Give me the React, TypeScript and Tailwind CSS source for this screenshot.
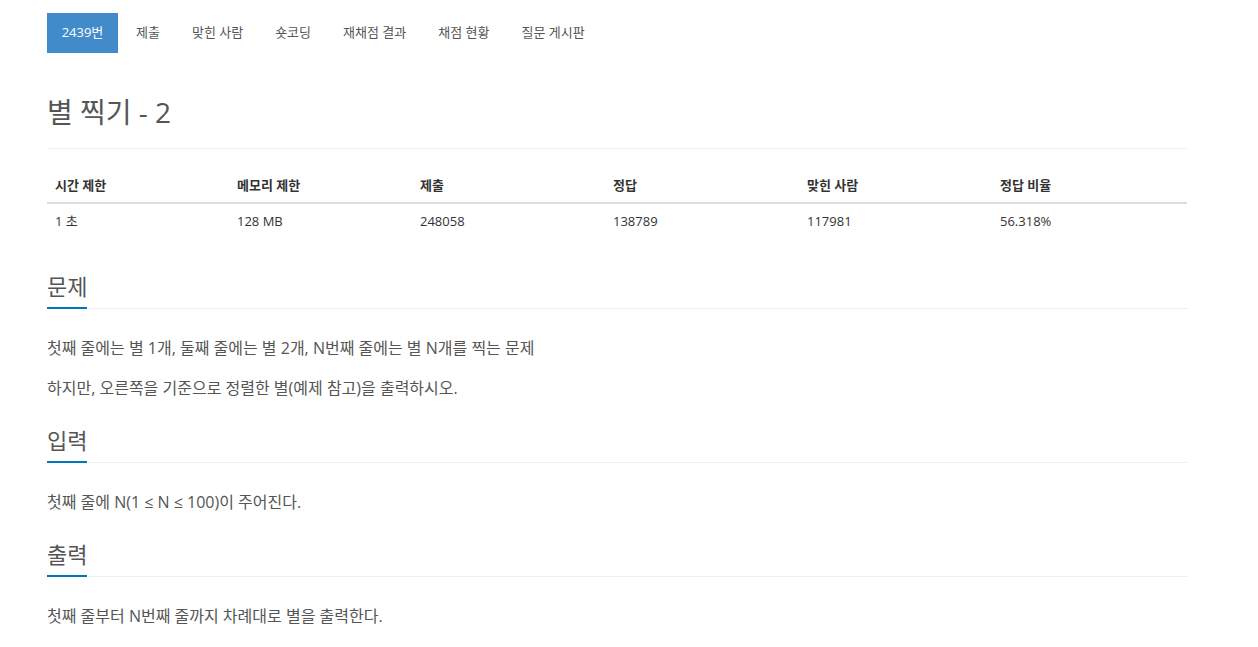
import React from "react";

const font = { fontFamily: '"Open Sans", "Noto Sans CJK KR", sans-serif' };

const tabs = ["제출", "맞힌 사람", "숏코딩", "재채점 결과", "채점 현황", "질문 게시판"];

function Section({ title, children }: { title: string; children: React.ReactNode }) {
  return (
    <div>
      <div className="flex border-b border-dotted border-[#e2e2e2]">
        <h2 className="text-[22px] leading-[32px] text-[#555] border-b-2 border-[#0076c0] w-[40px] pb-[5px] mb-[-1px] whitespace-nowrap">
          {title}
        </h2>
      </div>
      <div className="pt-[26px] text-[16px] text-[#555] leading-[26px]">{children}</div>
    </div>
  );
}

export default function App() {
  return (
    <div className="bg-white min-h-[647px] pl-[47px] w-[1187px]" style={font}>
      <div className="pt-[13px] flex">
        <div className="bg-[#428bca] text-white text-[13px] h-[40px] w-[71px] justify-center flex items-center">2439번</div>
        {tabs.map((t, i) => (
          <div
            key={t}
            className={(i === 0 ? "ml-[3px] " : "ml-[2px] ") + "text-[#555] text-[13px] h-[40px] px-[15px] flex items-center"}
          >
            {t}
          </div>
        ))}
      </div>
      <h1 className="mt-[39px] text-[28px] leading-[40px] text-[#555] pb-[16px] border-b border-[#eee]">별 찍기 - 2</h1>
      <table className="mt-[21px] w-full text-[13px] text-[#333] border-collapse">
        <thead>
          <tr className="border-b-2 border-[#ddd]">
            <th className="w-[182px] text-left font-bold px-[8px] h-[33px]">시간 제한</th>
            <th className="w-[183px] text-left font-bold px-[8px]">메모리 제한</th>
            <th className="w-[193px] text-left font-bold px-[8px]">제출</th>
            <th className="w-[194px] text-left font-bold px-[8px]">정답</th>
            <th className="w-[193px] text-left font-bold px-[8px]">맞힌 사람</th>
            <th className="text-left font-bold px-[8px]">정답 비율</th>
          </tr>
        </thead>
        <tbody>
          <tr>
            <td className="px-[8px] h-[36px]">1 초</td>
            <td className="px-[8px]">128 MB</td>
            <td className="px-[8px]">248058</td>
            <td className="px-[8px]">138789</td>
            <td className="px-[8px]">117981</td>
            <td className="px-[8px]">56.318%</td>
          </tr>
        </tbody>
      </table>
      <div className="mt-[31px] flex flex-col gap-[23px]">
        <Section title="문제">
          <p className="mb-[14px]">첫째 줄에는 별 1개, 둘째 줄에는 별 2개, N번째 줄에는 별 N개를 찍는 문제</p>
          <p>하지만, 오른쪽을 기준으로 정렬한 별(예제 참고)을 출력하시오.</p>
        </Section>
        <Section title="입력">
          <p>첫째 줄에 N(1 ≤ N ≤ 100)이 주어진다.</p>
        </Section>
        <Section title="출력">
          <p>첫째 줄부터 N번째 줄까지 차례대로 별을 출력한다.</p>
        </Section>
      </div>
    </div>
  );
}
